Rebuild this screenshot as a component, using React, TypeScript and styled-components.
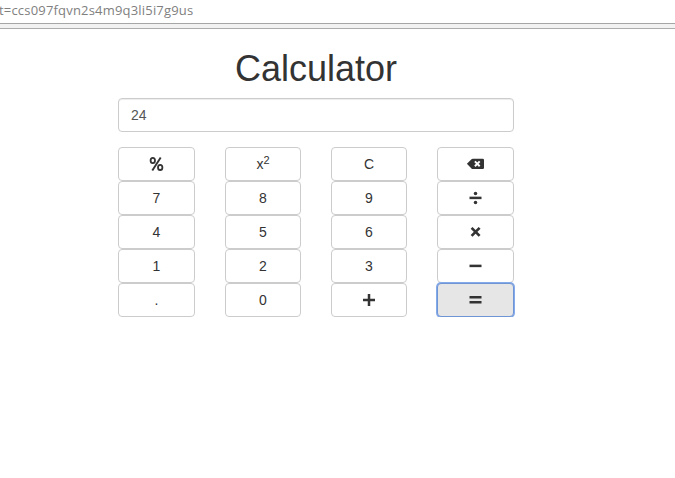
import React from 'react';
import styled, { createGlobalStyle, css } from 'styled-components';

const GlobalStyle = createGlobalStyle`
  *, *::before, *::after { box-sizing: border-box; }
  html, body { margin: 0; background: #fff; overflow: hidden; }
  body { font-family: "Liberation Sans", Arial, sans-serif; font-size: 14px; line-height: 20px; color: #333; }
`;

const AddressBar = styled.div`
  height: 23px;
  line-height: 21px;
  font-family: "Open Sans", "Noto Sans", sans-serif;
  font-size: 13px;
  letter-spacing: 0.19px;
  color: #808080;
  white-space: nowrap;
  overflow: hidden;
`;

const AddressText = styled.span`
  display: block;
  margin-left: -1px;
`;

const BrowserEdge = styled.div`
  height: 6px;
  background: #f2f2f2;
  border-top: 1px solid #a6a6a6;
  border-bottom: 1px solid #adadad;
`;

const Calculator = styled.main`
  width: 396px;
  margin: 20px 0 0 118px;
`;

const Title = styled.h1`
  margin: 0 0 10px;
  font-size: 36px;
  font-weight: 400;
  line-height: 39px;
  text-align: center;
`;

const Display = styled.input`
  display: block;
  width: 100%;
  height: 34px;
  margin-bottom: 15px;
  padding: 6px 12px;
  border: 1px solid #ccc;
  border-radius: 4px;
  box-shadow: inset 0 1px 1px rgba(0, 0, 0, 0.075);
  font: inherit;
  color: #555;
  outline: none;
`;

const Keypad = styled.div`
  display: grid;
  grid-template-columns: 77px 76px 76px 77px;
  column-gap: 30px;
`;

const Key = styled.button<{ $active?: boolean }>`
  display: flex;
  align-items: center;
  justify-content: center;
  height: 34px;
  padding: 0;
  border: 1px solid #ccc;
  border-radius: 4px;
  background: #fff;
  font: inherit;
  color: #333;
  ${({ $active }) => $active && css`
    background: #e6e6e6;
    border-color: #7095d5;
    box-shadow: 0 0 0 1px #83aae9;
  `}
`;

const Power = styled.sup`
  position: relative;
  top: -5px;
  font-size: 11px;
  line-height: 0;
  vertical-align: baseline;
`;

const Glyph = styled.svg`
  display: block;
  width: 20px;
  height: 16px;
  fill: none;
  stroke: #333;
  stroke-width: 2.5;
`;

const icons: Record<string, React.ReactNode> = {
  percent: <><path d="M13.7 1.4 5.3 14.4" strokeWidth="1.9" /><ellipse cx="5.8" cy="4.5" rx="2.2" ry="2.6" strokeWidth="1.8" /><ellipse cx="13.2" cy="11.4" rx="2.2" ry="2.6" strokeWidth="1.8" /></>,
  backspace: <><path d="M0.9 7.8 5.5 3.2Q6 2.7 6.7 2.7H16.7Q18 2.7 18 4V11.7Q18 13 16.7 13H6.7Q6 13 5.5 12.5Z" fill="#333" stroke="none" /><path d="m8.9 5.4 4.8 4.8m0-4.8-4.8 4.8" stroke="#fff" strokeWidth="2" /></>,
  divide: <><path d="M3.5 7.9h12" /><circle cx="9.5" cy="3.4" r="1.75" fill="#333" stroke="none" /><circle cx="9.5" cy="12.4" r="1.75" fill="#333" stroke="none" /></>,
  times: <path d="m5.6 3.9 8 8m0-8-8 8" strokeWidth="2.7" />,
  minus: <path d="M3.5 7.9h12" />,
  plus: <path d="M4 7.9h12M10 1.9v12" />,
  equals: <path d="M3.5 5.2h12M3.5 10.3h12" />,
};

const keys = ['percent', 'x²', 'C', 'backspace', '7', '8', '9', 'divide', '4', '5', '6', 'times', '1', '2', '3', 'minus', '.', '0', 'plus', 'equals'];

function KeyLabel({ name }: { name: string }) {
  if (icons[name]) return <Glyph viewBox="0 0 20 16" aria-hidden="true">{icons[name]}</Glyph>;
  if (name === 'x²') return <span>x<Power>2</Power></span>;
  return <span>{name}</span>;
}

export default function App() {
  return (
    <>
      <GlobalStyle />
      <AddressBar><AddressText>t=ccs097fqvn2s4m9q3li5i7g9us</AddressText></AddressBar>
      <BrowserEdge />
      <Calculator>
        <Title>Calculator</Title>
        <Display aria-label="Result" value="24" readOnly />
        <Keypad>
          {keys.map((name) => (
            <Key key={name} type="button" aria-label={name} $active={name === 'equals'}><KeyLabel name={name} /></Key>
          ))}
        </Keypad>
      </Calculator>
    </>
  );
}
